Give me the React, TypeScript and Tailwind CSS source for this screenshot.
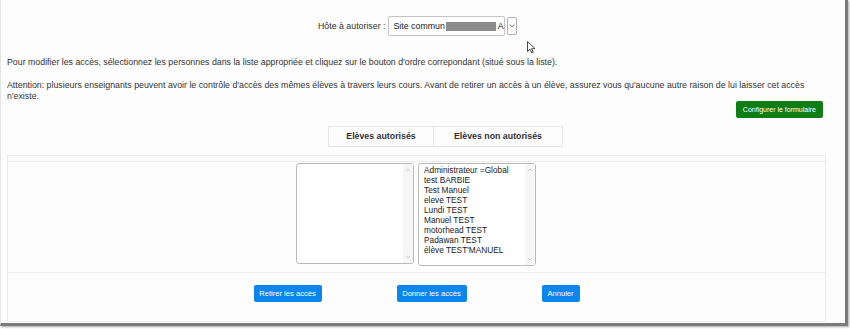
import { ChevronDown, ChevronUp } from 'lucide-react'

const students = [
  'Administrateur =Global',
  'test BARBIE',
  'Test Manuel',
  'eleve TEST',
  'Lundi TEST',
  'Manuel TEST',
  'motorhead TEST',
  'Padawan TEST',
  'élève TEST\'MANUEL',
]

function FakeScroll() {
  return (
    <div className="flex w-[10px] flex-col items-center justify-between bg-[#f6f6f6] py-[2px] text-[#b5b5b5]">
      <ChevronUp size={8} strokeWidth={2} />
      <ChevronDown size={8} strokeWidth={2} />
    </div>
  )
}

function ListBox({ items, height }: { items: string[]; height: string }) {
  return (
    <div className={`flex w-[118px] ${height} rounded-[3px] border border-[#b9b9b9] bg-white`}>
      <ul className="flex-1 px-[5px] pt-[1px] text-[8.3px] leading-[10px] text-[#222]">
        {items.map((s) => (
          <li key={s} className="whitespace-nowrap">{s}</li>
        ))}
      </ul>
      <FakeScroll />
    </div>
  )
}

export default function App() {
  return (
    <div className="h-[329px] w-[850px] bg-white font-['Liberation_Sans',Arial,sans-serif] text-[8.8px] leading-[11px] text-[#333]">
      <div className="relative h-[326px] w-[848px] border-b-[3px] border-l border-r-[3px] border-b-[#7a7a7a] border-l-[#e4e4e4] border-r-[#7a7a7a] bg-[#fdfdfd] shadow-[1px_1px_2px_rgba(0,0,0,0.35)]">
        <div className="flex items-center pt-[16px] pl-[317px]">
          <span className="whitespace-nowrap">Hôte à autoriser :</span>
          <div className="ml-[3px] flex h-[20px] w-[117px] items-center whitespace-nowrap rounded-[2px] border border-[#c4c4c4] bg-white pl-[4px] text-[8.8px] text-[#222]">
            Site commun
            <span className="ml-[1px] inline-block h-[9px] w-[50px] bg-[#8c8c8c]" />
            <span className="ml-[2px]">A</span>
          </div>
          <div className="ml-[2px] flex h-[18px] w-[10px] items-center justify-center rounded-[2px] border border-[#b3b3b3] bg-white text-[#555]">
            <ChevronDown size={8} strokeWidth={2.5} />
          </div>
        </div>

        <svg className="absolute left-[526px] top-[41px]" width="9" height="13" viewBox="0 0 9 13">
          <path d="M0.5 0.5 L0.5 10.5 L3 8.2 L4.8 12 L6.3 11.3 L4.6 7.7 L8 7.7 Z" fill="white" stroke="#333" strokeWidth="0.9" />
        </svg>

        <p className="mt-[21px] px-[6px]">Pour modifier les accès, sélectionnez les personnes dans la liste appropriée et cliquez sur le bouton d'ordre correpondant (situé sous la liste).</p>
        <p className="mt-[12px] pl-[6px] pr-[22px]">Attention: plusieurs enseignants peuvent avoir le contrôle d'accès des mêmes élèves à travers leurs cours. Avant de retirer un accès à un élève, assurez vous qu'aucune autre raison de lui laisser cet accès n'existe.</p>

        <div className="mt-[-1px] flex justify-end pr-[22px]">
          <button type="button" className="h-[17px] whitespace-nowrap rounded-[2px] bg-[#0f7d16] px-[7px] text-[7px] text-white">Configurer le formulaire</button>
        </div>

        <div className="ml-[327px] mt-[8px] flex h-[21px] w-[235px] border border-[#e6e6e6] text-[8.8px] font-bold text-[#333]">
          <div className="flex w-[105px] items-center justify-center whitespace-nowrap border-r border-[#e6e6e6]">Elèves autorisés</div>
          <div className="flex flex-1 items-center justify-center whitespace-nowrap">Elèves non autorisés</div>
        </div>

        <div className="ml-[6px] mt-[8px] w-[819px] border border-[#ececec] bg-[#fdfdfd]">
          <div className="h-[6px] border-b border-[#ececec]" />
          <div className="flex h-[111px] justify-center gap-[4px] border-b border-[#ececec] pt-[1px]">
            <ListBox items={[]} height="h-[101px]" />
            <div className="w-[119px]">
              <ListBox items={students} height="h-[103px]" />
            </div>
          </div>
          <div className="flex h-[48px] items-start justify-center gap-[75px] pt-[12px] text-[7.6px] text-white">
            <button type="button" className="h-[17px] w-[68px] whitespace-nowrap rounded-[2px] bg-[#0c86ef]">Retirer les accès</button>
            <button type="button" className="h-[17px] w-[70px] whitespace-nowrap rounded-[2px] bg-[#0c86ef]">Donner les accès</button>
            <button type="button" className="h-[17px] w-[38px] whitespace-nowrap rounded-[2px] bg-[#0c86ef]">Annuler</button>
          </div>
        </div>
      </div>
    </div>
  )
}
